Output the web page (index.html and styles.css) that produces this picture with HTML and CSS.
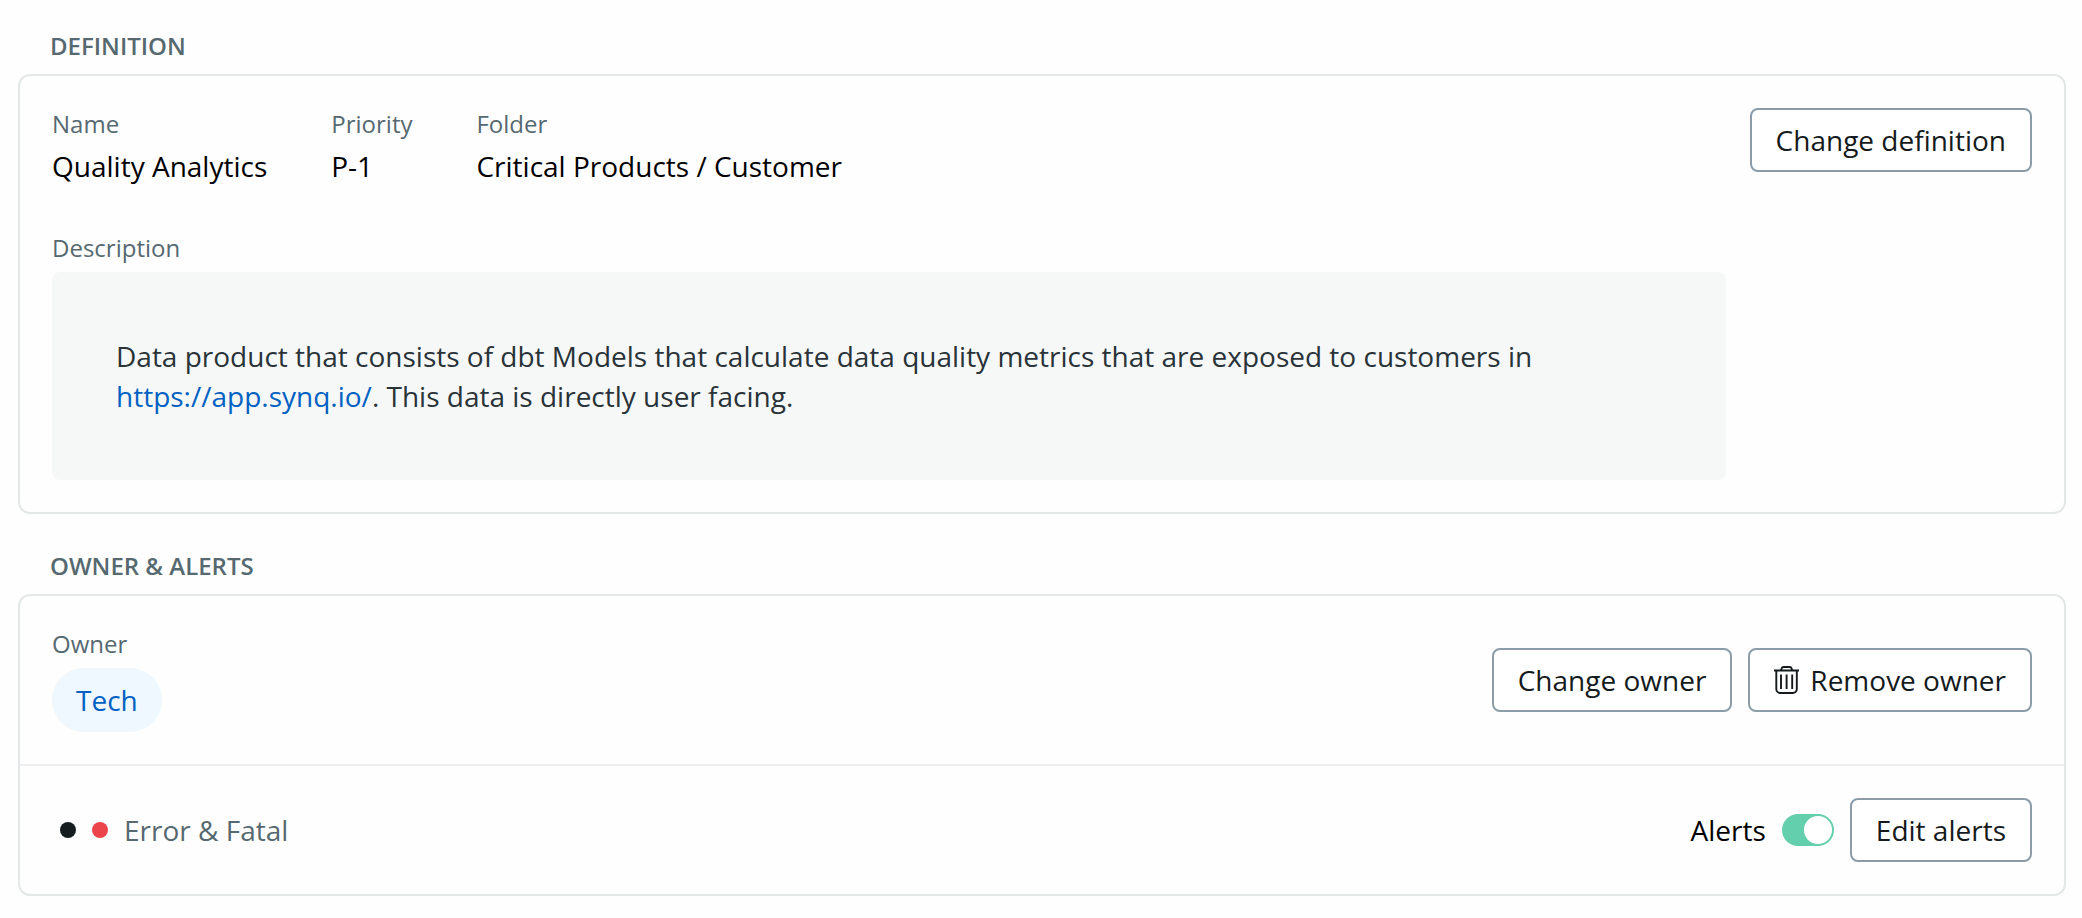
FILE: index.html
```html
<!DOCTYPE html>
<html lang="en">
<head>
    <meta charset="UTF-8">
    <meta name="viewport" content="width=device-width, initial-scale=1.0">
    <title>Quality Analytics</title>
    <link rel="stylesheet" href="styles.css">
</head>
<body>

    <section>
        <h2>DEFINITION</h2>
        <div class="card">
            <div class="row definition">
                <div class="details">
                    <dl class="fields">
                        <div class="field">
                            <dt>Name</dt>
                            <dd>Quality Analytics</dd>
                        </div>
                        <div class="field">
                            <dt>Priority</dt>
                            <dd>P-1</dd>
                        </div>
                        <div class="field">
                            <dt>Folder</dt>
                            <dd>Critical Products / Customer</dd>
                        </div>
                    </dl>
                    <div class="field">
                        <h3>Description</h3>
                        <p class="description">Data product that consists of dbt Models that calculate data quality metrics that are exposed to customers in <a href="https://app.synq.io/">https://app.synq.io/</a>. This data is directly user facing.</p>
                    </div>
                </div>
                <button type="button" class="btn">Change definition</button>
            </div>
        </div>
    </section>

    <section>
        <h2>OWNER &amp; ALERTS</h2>
        <div class="card">
            <div class="row">
                <div class="field">
                    <h3>Owner</h3>
                    <a class="tag" href="#">Tech</a>
                </div>
                <div class="actions">
                    <button type="button" class="btn">Change owner</button>
                    <button type="button" class="btn">
                        <svg class="icon" viewBox="0 0 26 28" fill="none" stroke="currentColor" stroke-width="1.9" aria-hidden="true">
                            <path d="M0 4.500h25M7 4.500l.6-2a2.200 2.200 0 0 1 2-1.500h6a2.200 2.200 0 0 1 2 1.500l.6 2"/>
                            <path d="M2.300 4.500V23a4 4 0 0 0 4 4h12.500a4 4 0 0 0 4-4V4.500"/>
                            <path d="M7 8.500v14.500M12.600 8.500v14.500M18.200 8.500v14.500"/>
                        </svg>
                        Remove owner
                    </button>
                </div>
            </div>
            <div class="row">
                <div class="severity">
                    <span class="dot fatal"></span>
                    <span class="dot error"></span>
                    <span>Error &amp; Fatal</span>
                </div>
                <div class="actions">
                    <label for="alerts">Alerts</label>
                    <input type="checkbox" id="alerts" class="toggle" checked>
                    <button type="button" class="btn">Edit alerts</button>
                </div>
            </div>
        </div>
    </section>

</body>
</html>
```

FILE: styles.css
```css
* {
    margin: 0;
    padding: 0;
    box-sizing: border-box;
}

body {
    padding: 30px 16px 22px 18px;
    background-color: #fefefe;
    color: #000;
    font-family: "Open Sans", "Noto Sans", sans-serif;
    font-size: 28px;
    line-height: 36px;
}

section + section {
    margin-top: 36px;
}

h2 {
    margin: 0 32px 12px;
    color: #566970;
    font-size: 24px;
    font-weight: 600;
    line-height: 32px;
}

.card {
    border: 2px solid #e4e7e8;
    border-radius: 12px;
}

.row {
    display: flex;
    align-items: center;
    justify-content: space-between;
    gap: 24px;
    padding: 32px;
}

.row + .row {
    border-top: 2px solid #eceeef;
}

.definition {
    align-items: flex-start;
}

.details {
    flex: 1;
    display: flex;
    flex-direction: column;
    gap: 48px;
}

.fields {
    display: flex;
    gap: 64px;
}

.field {
    display: flex;
    flex-direction: column;
    align-items: flex-start;
    gap: 8px;
}

dt, h3 {
    color: #566970;
    font-size: 24px;
    font-weight: 400;
    line-height: 32px;
}

.description {
    width: 100%;
    padding: 64px;
    background-color: #f6f8f8;
    border-radius: 8px;
    color: #293338;
    line-height: 40px;
}

a {
    color: #0061c2;
    text-decoration: none;
}

.tag {
    padding: 14px 24px;
    background-color: #eff7ff;
    border-radius: 32px;
}

.actions {
    display: flex;
    align-items: center;
    gap: 16px;
}

/* Buttons */
.btn {
    display: flex;
    align-items: center;
    gap: 10px;
    padding: 12px 24px;
    background-color: #fff;
    border: 2px solid #8a9ca8;
    border-radius: 8px;
    color: #151a1c;
    font: inherit;
    white-space: nowrap;
    cursor: pointer;
}

.icon {
    width: 26px;
    height: 28px;
}

/* Alert severity */
.severity {
    display: flex;
    align-items: center;
    gap: 16px;
    padding-left: 8px;
    color: #566970;
}

.dot {
    width: 16px;
    height: 16px;
    border-radius: 50%;
}

.fatal {
    background-color: #151d1f;
}

.error {
    background-color: #ec444b;
}

/* Toggle switch */
.toggle {
    appearance: none;
    display: flex;
    width: 52px;
    height: 32px;
    padding: 2px;
    background-color: #c3ccd1;
    border-radius: 16px;
    cursor: pointer;
}

.toggle::before {
    content: "";
    width: 28px;
    height: 28px;
    background-color: #fff;
    border-radius: 50%;
}

.toggle:checked {
    justify-content: flex-end;
    background-color: #64cfac;
}
```
